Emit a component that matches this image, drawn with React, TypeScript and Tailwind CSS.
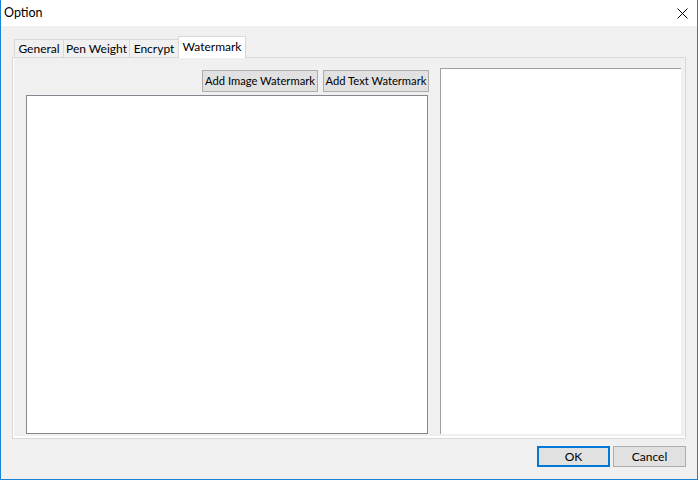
import React from 'react';

const tabs = [
  { label: 'General', width: 'w-[49px]' },
  { label: 'Pen Weight', width: 'w-[66px]' },
  { label: 'Encrypt', width: 'w-[49px]' },
];

function CloseIcon() {
  return (
    <svg width="11" height="11" viewBox="0 0 11 11" className="text-black">
      <path d="M0.5 0.5L10.5 10.5M10.5 0.5L0.5 10.5" stroke="currentColor" strokeWidth="1" fill="none" />
    </svg>
  );
}

export default function App() {
  return (
    <div
      className="flex h-[480px] w-[698px] flex-col whitespace-nowrap border-x border-b border-[#1883d7] bg-[#f0f0f0] text-[12px] text-black"
      style={{ fontFamily: 'Lato, "Noto Sans", sans-serif' }}
    >
      {/* Title bar */}
      <div className="flex h-[26px] shrink-0 items-center justify-between bg-white pl-[3px] pr-[9px]">
        <span className="text-[12.5px] leading-none">Option</span>
        <CloseIcon />
      </div>

      <div className="flex flex-col px-[11px]">
        {/* Tab strip */}
        <div className="mt-[10px] flex h-[21px] items-end pl-[2px]">
          {tabs.map((t) => (
            <div
              key={t.label}
              className={`flex h-[18px] ${t.width} items-center justify-center border-l border-t border-[#d9d9d9] bg-[#f0f0f0] leading-none`}
            >
              {t.label}
            </div>
          ))}
          <div className="relative z-10 -mb-px flex h-[22px] w-[68px] items-start justify-center border-x border-t border-[#d9d9d9] bg-white pt-[4px] leading-none">
            Watermark
          </div>
        </div>

        {/* Tab panel */}
        <div className="flex h-[382px] border border-[#d9d9d9] pb-[4px] pl-[13px] pr-[4px] shadow-[inset_1px_-2px_0_#ffffff]">
          <div className="flex w-[402px] flex-col pt-[12px]">
            <div className="-mr-px flex h-[22px] shrink-0 justify-end gap-[5px]">
              <button className="h-[22px] w-[116px] border border-[#adadad] bg-[#e1e1e1] text-[11.2px] leading-none">
                Add Image Watermark
              </button>
              <button className="h-[22px] w-[106px] border border-[#adadad] bg-[#e1e1e1] text-[11.2px] leading-none">
                Add Text Watermark
              </button>
            </div>
            <div className="mt-[3px] flex-1 border border-[#828790] bg-white" />
          </div>
          <div className="ml-[12px] flex flex-1 flex-col pt-[10px]">
            <div className="flex-1 border-l border-t border-[#a0a0a0] bg-white" />
          </div>
        </div>

        {/* Dialog buttons */}
        <div className="mt-[7px] flex justify-end gap-[3px]">
          <button className="h-[21px] w-[73px] border-2 border-[#0078d7] bg-[#e1e1e1] leading-none">OK</button>
          <button className="h-[21px] w-[73px] border border-[#adadad] bg-[#e1e1e1] leading-none">Cancel</button>
        </div>
      </div>
    </div>
  );
}
